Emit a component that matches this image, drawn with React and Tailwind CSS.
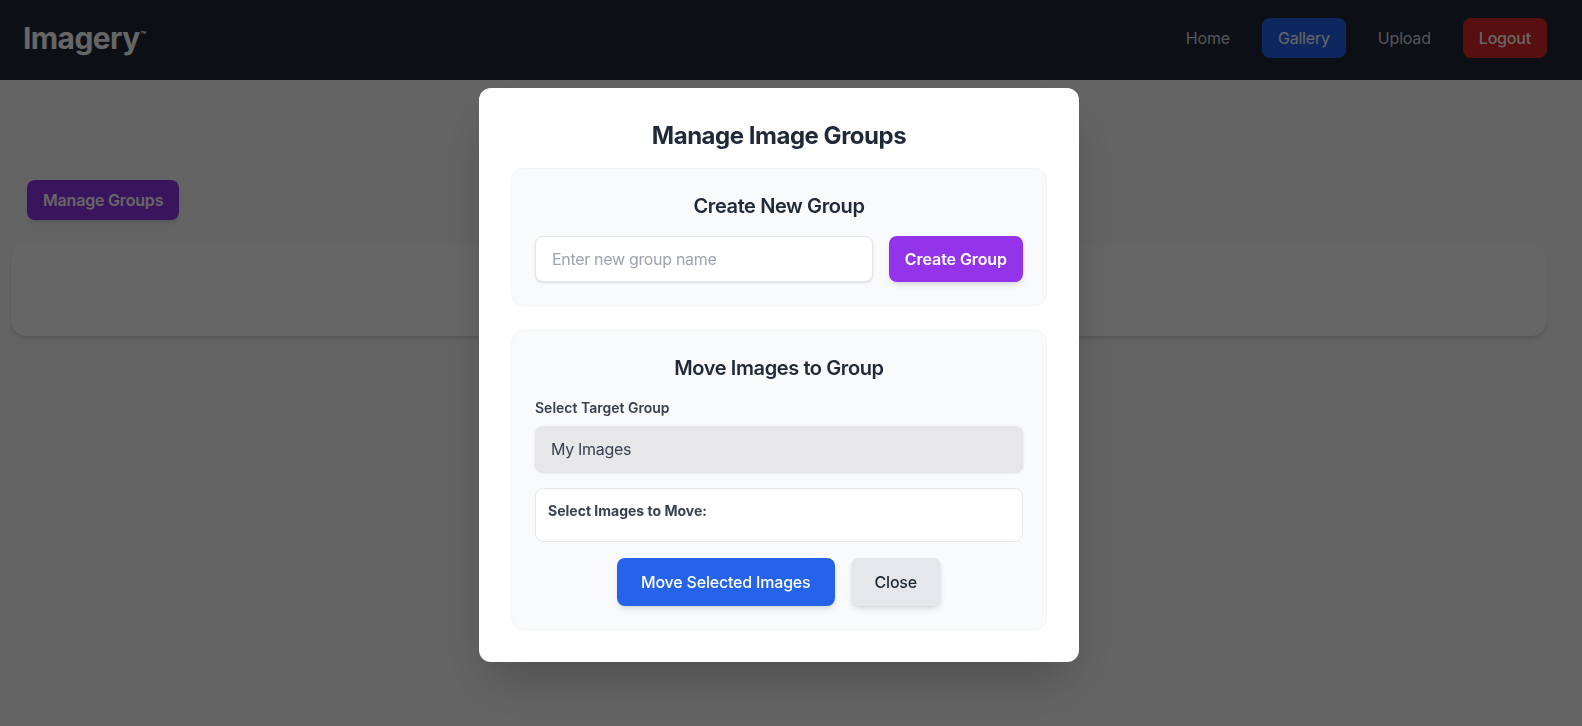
import React from "react";

function NavLink({ children, className = "" }) {
  return (
    <a href="#" className={`rounded-lg px-4 py-2 text-base leading-6 tracking-[-0.012em] ${className}`}>
      {children}
    </a>
  );
}

export default function App() {
  return (
    <div className="relative min-h-screen w-full bg-[#f9fafb] font-['Inter',sans-serif]">
      <nav className="h-20 w-full bg-[#1f2937]">
        <div className="ml-[11px] flex h-full w-[1536px] items-center justify-between pb-1 pl-3">
          <a href="#" className="flex items-start text-3xl font-bold leading-9 tracking-[-0.02em] text-white">
            Imagery
            <span className="ml-px mt-[10px] text-[9px] font-bold leading-none tracking-normal">™</span>
          </a>
          <div className="flex items-center gap-4">
            <NavLink className="text-[#d1d5db]">Home</NavLink>
            <NavLink className="bg-[#2563eb] text-white">Gallery</NavLink>
            <NavLink className="text-[#d1d5db]">Upload</NavLink>
            <NavLink className="bg-[#dc2626] font-medium text-white">Logout</NavLink>
          </div>
        </div>
      </nav>

      <main className="ml-[11px] w-[1536px]">
        <div className="px-4 pt-[100px]">
          <button className="rounded-lg bg-[#9333ea] px-4 py-2 text-base font-semibold leading-6 tracking-[-0.012em] text-white shadow-md">
            Manage Groups
          </button>
        </div>
        <div className="mt-6 h-[92px] rounded-2xl bg-white shadow-md"></div>
      </main>

      {/* modal */}
      <div className="fixed inset-0 flex items-start justify-center bg-black/60 pr-6 pt-[88px]">
        <div className="w-[600px] rounded-xl bg-white p-8 shadow-2xl">
          <h2 className="mb-4 text-center text-2xl font-bold leading-8 tracking-[-0.02em] text-[#1f2937]">Manage Image Groups</h2>

          <div className="mb-6 rounded-xl border border-[#f3f4f6] bg-[#f9fafb] p-[23px]">
            <h3 className="mb-4 text-center text-xl font-semibold leading-7 tracking-[-0.02em] text-[#1f2937]">Create New Group</h3>
            <div className="flex gap-4">
              <input
                type="text"
                placeholder="Enter new group name"
                className="h-[46px] flex-1 rounded-lg border border-[#e5e7eb] bg-white px-4 text-base tracking-[-0.02em] text-[#1f2937] shadow-sm outline-none placeholder:text-[#9ca3af]"
              />
              <button className="h-[46px] rounded-lg bg-[#9333ea] px-4 text-base font-semibold tracking-[-0.005em] text-white shadow-md">
                Create Group
              </button>
            </div>
          </div>

          <div className="rounded-xl border border-[#f3f4f6] bg-[#f9fafb] p-[23px]">
            <h3 className="mb-4 text-center text-xl font-semibold leading-7 tracking-[-0.02em] text-[#1f2937]">Move Images to Group</h3>
            <label className="mb-2 block text-sm font-semibold leading-5 text-[#374151]">Select Target Group</label>
            <div className="mb-4 flex h-[46px] items-center rounded-lg bg-[#e7e7ea] px-4 text-base tracking-[-0.02em] text-[#374151] shadow-sm">
              My Images
            </div>
            <div className="rounded-lg border border-[#e5e7eb] bg-white p-3">
              <p className="mb-2 text-sm font-bold leading-5 text-[#374151]">Select Images to Move:</p>
            </div>
            <div className="mt-4 flex justify-center gap-4">
              <button className="rounded-lg bg-[#2563eb] px-6 py-3 text-base font-medium leading-6 tracking-[-0.012em] text-white shadow-md">
                Move Selected Images
              </button>
              <button className="rounded-lg bg-[#e5e7eb] px-6 py-3 text-base font-medium leading-6 tracking-[-0.012em] text-[#1f2937] shadow-md">
                Close
              </button>
            </div>
          </div>
        </div>
      </div>
    </div>
  );
}
